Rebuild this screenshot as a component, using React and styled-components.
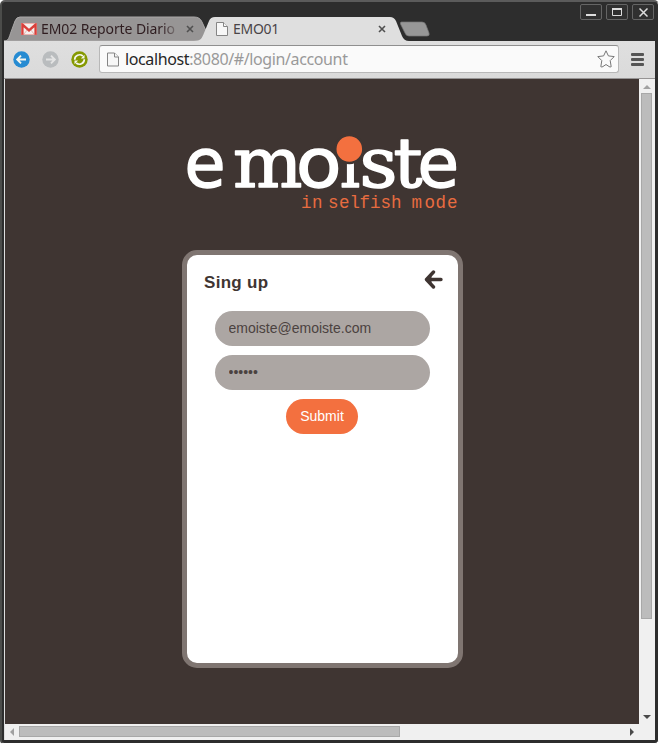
import React from "react";
import styled, { createGlobalStyle } from "styled-components";

const Global = createGlobalStyle`
  *, *::before, *::after { box-sizing: border-box; }
  body { margin: 0; background: #fff; overflow: hidden; }
  svg { display: block; flex: none; }
`;

const uiFont = `"Noto Sans", "Open Sans", sans-serif`;

const Frame = styled.div`
  width: 659px;
  height: 744px;
  display: flex;
  flex-direction: column;
  background: #2d2d2d;
  border: 2px solid #4b4c4a;
  border-top-color: #5b5b5b;
  border-bottom: 1px solid #fff;
  border-right: 1px solid #fff;
  border-radius: 5px 5px 4px 4px;
  padding: 0 3px 3px 2px;
  overflow: hidden;
`;

const TopArea = styled.header`
  height: 39px;
  display: grid;
  grid-template-columns: 428px 1fr;
  flex: none;
`;

const TabStrip = styled.div`
  position: relative;
  height: 39px;
`;

const TabShapes = styled.svg`
  position: absolute;
  inset: 0;
`;

const TabRow = styled.div`
  position: relative;
  display: grid;
  grid-template-columns: 192px 196px;
  padding: 15px 0 0 17px;
  font: 14px ${uiFont};
`;

const Tab = styled.div`
  height: 24px;
  display: flex;
  align-items: center;
  padding-left: ${(p) => (p.$active ? 3 : 0)}px;
  color: ${(p) => (p.$active ? "#4a4547" : "#2f1d20")};
`;

const TabTitle = styled.span`
  width: ${(p) => p.$width}px;
  margin: 0 ${(p) => p.$after || 0}px 0 ${(p) => p.$gap}px;
  overflow: hidden;
  white-space: nowrap;
  letter-spacing: ${(p) => p.$spacing}px;
  line-height: 22px;
  ${(p) => p.$fade && "mask-image: linear-gradient(90deg, #000 89%, transparent 104%);"}
`;

const WindowButtons = styled.div`
  display: flex;
  justify-content: flex-end;
  gap: 4px;
  padding: 2px 1px 0 0;
`;

const WindowButton = styled.button`
  width: 22px;
  height: 16px;
  padding: 0;
  display: grid;
  place-items: center;
  background: #303030;
  border: 1px solid #656565;
  border-radius: 2px;
`;

const Toolbar = styled.nav`
  height: 38px;
  flex: none;
  display: flex;
  align-items: center;
  padding: 0 9px 1px 9px;
  background: linear-gradient(#dfdfdf, #dadada);
  border-bottom: 1px solid #969494;
`;

const NavButtons = styled.div`
  display: flex;
  gap: 12px;
  width: 86px;
`;

const AddressBar = styled.div`
  width: 520px;
  height: 28px;
  display: flex;
  align-items: center;
  padding: 0 3px 0 7px;
  background: #fafafa;
  border: 1px solid #b8b8b8;
  border-top: 1px solid #8f8f8f;
  border-radius: 3px;
`;

const Url = styled.div`
  flex: 1;
  margin-left: 6px;
  font: 16px ${uiFont};
  letter-spacing: -0.38px;
  line-height: 24px;
  color: #999;
  white-space: nowrap;
`;

const Host = styled.span`
  color: #262626;
`;

const MenuButton = styled.div`
  width: 13px;
  margin-left: 12px;
  display: grid;
  gap: 2px;
`;

const MenuLine = styled.i`
  height: 3px;
  border-radius: 1px;
  background: #555;
`;

const Viewport = styled.div`
  flex: 1;
  display: grid;
  grid-template: 645px 1fr / 634px 1fr;
  border-left: 1px solid #dedede;
  background: #f0f0f0;
`;

const Page = styled.main`
  background: #3f3532;
  display: flex;
  flex-direction: column;
  padding: 46px 0 0 177px;
`;

const Card = styled.section`
  width: 281px;
  height: 418px;
  margin-top: 35px;
  padding: 15px 18px;
  background: #fff;
  border: 5px solid #7f7571;
  border-radius: 15px;
  font-family: "Liberation Sans", Arial, sans-serif;
`;

const CardHeader = styled.div`
  height: 41px;
  display: flex;
  justify-content: space-between;
  align-items: flex-start;
  margin-right: -3px;
`;

const Heading = styled.h1`
  margin: 3px 0 0 -1px;
  font-size: 17px;
  letter-spacing: 0.3px;
  line-height: 20px;
  color: #3f3532;
`;

const Form = styled.div`
  display: flex;
  flex-direction: column;
  align-items: center;
  gap: 9px;
`;

const Field = styled.input`
  width: 215px;
  height: 35px;
  padding: 0 14px 1px 13.5px;
  border: 0;
  outline: 0;
  border-radius: 18px;
  background: #aca6a3;
  color: #4b4240;
  font: 14px "Liberation Sans", Arial, sans-serif;
`;

const Submit = styled.button`
  width: 72px;
  height: 35px;
  padding: 0 0 1px;
  margin-right: 1px;
  border: 0;
  border-radius: 18px;
  background: #f3703f;
  color: #fff;
  font: 14px "Liberation Sans", Arial, sans-serif;
`;

const VerticalScroll = styled.div`
  display: flex;
  flex-direction: column;
  align-items: center;
  padding: 6px 1px 0 0;
`;

const VerticalThumb = styled.div`
  width: 11px;
  height: 526px;
  margin: 4px 0 96px;
  background: #bcbcbc;
  border: 1px solid #a8a8a8;
`;

const HorizontalScroll = styled.div`
  display: flex;
  align-items: center;
  padding: 0 5px 1px 5px;
`;

const HorizontalThumb = styled.div`
  width: 381px;
  height: 11px;
  margin: 0 auto 0 5px;
  background: #bcbcbc;
  border: 1px solid #a8a8a8;
`;

function Close() {
  return (
    <svg width="8" height="8" viewBox="0 0 8 8" stroke="#505050" strokeWidth="1.6">
      <path d="M1 1l6 6M7 1L1 7" />
    </svg>
  );
}

function Doc({ w = 12, h = 14 }) {
  return (
    <svg width={w} height={h} viewBox="0 0 12 14" fill="#f7f7f7" stroke="#858585">
      <path d="M.5.5H7.5L11.5 4.5V13.5H.5Z" />
      <path d="M7.5.5V4.5H11.5" />
    </svg>
  );
}

function Gmail() {
  return (
    <svg width="16" height="12" viewBox="0 0 16 12">
      <path fill="#f5efed" d="M0 0H16V12H0Z" />
      <path fill="none" stroke="#e3b5b0" d="M3 11L6.5 6.5M13 11L9.5 6.5" />
      <path fill="none" stroke="#d9403b" strokeWidth="2.4" d="M1.4 12V1.5L8 7.3L14.6 1.5V12" />
      <path fill="none" stroke="#df706b" strokeWidth=".6" d="M1 .3H15M1 11.7H15" />
    </svg>
  );
}

function Round({ kind }) {
  const fill = { back: "#268bd2", forward: "#b9bcbe", reload: "#859900" }[kind];
  const line = kind === "forward" ? "#e4e4e4" : "#f6f6ee";
  return (
    <svg width="17" height="17" viewBox="0 0 17 17" fill="none" stroke={line} strokeWidth="1.9">
      <circle cx="8.5" cy="8.5" r="8.2" fill={fill} stroke="none" />
      {kind === "back" && <path d="M13 8.5H4.5M8 4.7L4.2 8.5L8 12.3" />}
      {kind === "forward" && <path d="M4 8.5H12.5M9 4.7L12.8 8.5L9 12.3" />}
      {kind === "reload" && (
        <g strokeWidth="1.7">
          <path d="M3.700 8.800A4.900 4.900 0 0 1 11.800 5M13.300 8.200A4.900 4.900 0 0 1 5.200 12" />
          <path fill={line} stroke="none" d="M13.500 3.800V7.400H9.900ZM3.500 13.200V9.600H7.100Z" />
        </g>
      )}
    </svg>
  );
}

function Triangle({ dir }) {
  const tall = dir === "left" || dir === "right";
  const d = { up: "M0 4L4 0L8 4Z", down: "M0 0H8L4 4Z", left: "M4 0V8L0 4Z", right: "M0 0L4 4L0 8Z" }[dir];
  return (
    <svg width={tall ? 4 : 8} height={tall ? 8 : 4}>
      <path d={d} fill={dir === "up" || dir === "left" ? "#a1a1a1" : "#4a4a4a"} />
    </svg>
  );
}

const letters = [
  ["e", 184.5, 41, "DejaVu Sans"],
  ["m", 233, 69.5, "DejaVu Serif"],
  ["o", 296, 45.5, "DejaVu Sans"],
  ["ı", 340, 20, "DejaVu Serif"],
  ["s", 359.5, 38, "DejaVu Serif"],
  ["t", 393.5, 29, "DejaVu Serif"],
  ["e", 417.5, 41.5, "DejaVu Sans"],
];

const taglineX = "301 312 322 328 339 349.500 359.500 370 380.500 391 401 411.500 424.500 435.500 447";

function Logo() {
  return (
    <svg width="281" height="90" viewBox="182 125 281 90">
      <g fill="#fff" fontSize="68.5" stroke="#fff" strokeWidth="1.5" strokeLinejoin="round">
        {letters.map(([c, x, w, f], i) => (
          <text key={i} x={x} y="186.500" textLength={w} lengthAdjust="spacingAndGlyphs" fontFamily={`"${f}"`}>{c}</text>
        ))}
      </g>
      <circle cx="349.3" cy="149" r="14" fill="#f3703f" stroke="#3f3532" strokeWidth="2.4" />
      <text x={taglineX} y="207.500" fill="#e86c40" fontFamily='"Liberation Mono"' fontSize="17.500">in selfish mode</text>
    </svg>
  );
}

export default function App() {
  return (
    <>
      <Global />
      <Frame>
        <TopArea>
          <TabStrip>
            <TabShapes width="430" height="39">
              <path d="M0 39C5 39 5 35 7 30L11 19Q12.5 15 16 15H190Q196 15 198 20L204 33Q206 39 196 39Z" fill="#979595" stroke="#aaa8a8" />
              <path d="M190 39C197 39 198 36 200 31L205 19Q206.500 15 211 15H386Q390 15 392 19L398 34Q400 39 405 39Z" fill="#dfdfdf" />
              <path d="M397.500 20H418Q421 20 422 23L425 31Q426 34 423 34H405Q402 34 401 31L396.500 22Q396 20 397.500 20Z" fill="#979797" stroke="#777" strokeWidth=".7" />
            </TabShapes>
            <TabRow>
              <Tab><Gmail /><TabTitle $width={135} $gap={4} $after={10} $spacing={-0.1} $fade>EM02 Reporte Diario -</TabTitle><Close /></Tab>
              <Tab $active><Doc /><TabTitle $width={145} $gap={5} $spacing={-0.3}>EMO01</TabTitle><Close /></Tab>
            </TabRow>
          </TabStrip>
          <WindowButtons>
            <WindowButton aria-label="Minimize"><svg width="10" height="10"><path fill="#ddd" d="M0 7H10V9H0Z" /></svg></WindowButton>
            <WindowButton aria-label="Maximize"><svg width="10" height="8"><path fill="none" stroke="#ddd" d="M.5 1H9.500V7.500H.5Z" /><path fill="#ddd" d="M0 0H10V2H0Z" /></svg></WindowButton>
            <WindowButton aria-label="Close"><svg width="9" height="9"><path stroke="#ddd" strokeWidth="1.5" d="M.5.5L8.500 8.500M8.500.5L.5 8.500" /></svg></WindowButton>
          </WindowButtons>
        </TopArea>
        <Toolbar>
          <NavButtons><Round kind="back" /><Round kind="forward" /><Round kind="reload" /></NavButtons>
          <AddressBar>
            <Doc w={12} h={15} />
            <Url><Host>localhost</Host>:8080/#/login/account</Url>
            <svg width="18" height="18" viewBox="0 0 18 18" fill="none" stroke="#777"><path strokeLinejoin="round" d="M9 .8L11.400 5.900L17.200 6.600L13.200 10.600L14.200 16.700Q13 17.400 12 16.500L9 14.500L6 16.500Q5 17.400 3.800 16.700L4.800 10.600L.8 6.600L6.600 5.900Z" /></svg>
          </AddressBar>
          <MenuButton><MenuLine /><MenuLine /><MenuLine /></MenuButton>
        </Toolbar>
        <Viewport>
          <Page>
            <Logo />
            <Card>
              <CardHeader>
                <Heading>Sing up</Heading>
                <svg width="19" height="20" viewBox="0 0 19 20" fill="none" stroke="#3f3532" strokeWidth="3.4" strokeLinecap="round" strokeLinejoin="round"><path d="M17 9.500H3M9.500 2L2.500 9.500L9.500 17" /><path fill="#3f3532" strokeWidth="1" d="M2 9.500L7 4.500V14.500Z" /></svg>
              </CardHeader>
              <Form>
                <Field aria-label="Email" defaultValue="emoiste@emoiste.com" />
                <Field aria-label="Password" type="password" defaultValue="secret" />
                <Submit>Submit</Submit>
              </Form>
            </Card>
          </Page>
          <VerticalScroll><Triangle dir="up" /><VerticalThumb /><Triangle dir="down" /></VerticalScroll>
          <HorizontalScroll><Triangle dir="left" /><HorizontalThumb /><Triangle dir="right" /></HorizontalScroll>
        </Viewport>
      </Frame>
    </>
  );
}
